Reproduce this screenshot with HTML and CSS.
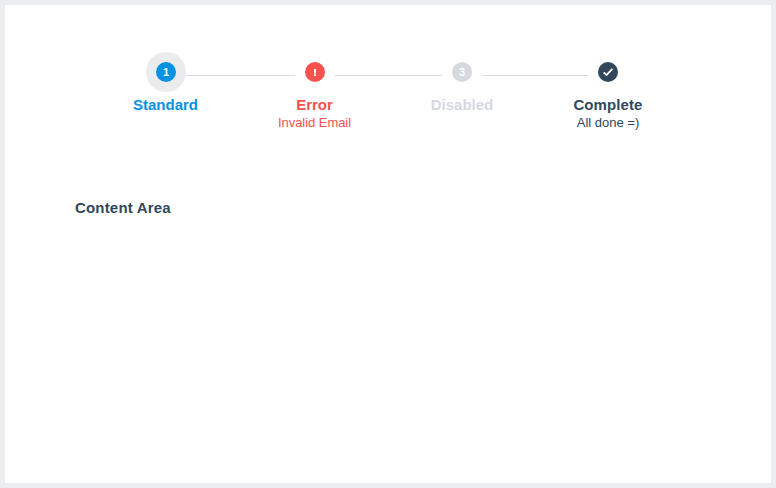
FILE: index.html
```
<!DOCTYPE html>
<html lang="en">
<head>
<meta charset="utf-8">
<title>Steps</title>
<link rel="stylesheet" href="styles.css">
</head>
<body>
<main class="panel">
  <ol class="steps">
    <li class="step step-current">
      <span class="halo"><span class="dot">1</span></span>
      <span class="label">Standard</span>
    </li>
    <li class="line line-first"></li>
    <li class="step step-error">
      <span class="halo"><span class="dot"><svg width="20" height="20" viewBox="0 0 20 20"><path d="M9 7h2v4.4H9zM9 12.2h2v1.8H9z" fill="#fff"/></svg></span></span>
      <span class="label">Error</span>
      <span class="note">Invalid Email</span>
    </li>
    <li class="line line-second"></li>
    <li class="step step-disabled">
      <span class="halo"><span class="dot">3</span></span>
      <span class="label">Disabled</span>
    </li>
    <li class="line line-third"></li>
    <li class="step step-complete">
      <span class="halo"><span class="dot"><svg width="20" height="20" viewBox="0 0 20 20"><path d="M5.7 10.3 8.5 13 14.4 6.8" fill="none" stroke="#fff" stroke-width="1.8"/></svg></span></span>
      <span class="label">Complete</span>
      <span class="note">All done =)</span>
    </li>
  </ol>
  <h1 class="heading">Content Area</h1>
</main>
</body>
</html>
```
FILE: styles.css
```
* { box-sizing: border-box; }
body {
  margin: 0;
  font-family: "Liberation Sans", Arial, sans-serif;
  color: #33475b;
}
.panel {
  height: 488px;
  padding: 47px 143px 0 141px;
  border: 5px solid #ebedef;
  background: #fff;
}
.steps {
  display: flex;
  height: 146px;
  margin: 0;
  padding: 0;
  list-style: none;
}
.step {
  display: flex;
  flex: none;
  flex-direction: column;
  align-items: center;
  width: 40px;
  white-space: nowrap;
}
.halo {
  display: flex;
  flex: none;
  align-items: center;
  justify-content: center;
  width: 40px;
  height: 40px;
  border-radius: 50%;
}
.dot {
  display: flex;
  align-items: center;
  justify-content: center;
  width: 20px;
  height: 20px;
  border-radius: 50%;
  background: currentColor;
  font-size: 11px;
  font-weight: bold;
  line-height: 20px;
  -webkit-text-fill-color: #fff;
}
.label {
  margin-top: 3px;
  font-size: 15px;
  font-weight: bold;
  line-height: 20px;
}
.note {
  font-size: 13px;
  line-height: 16px;
}
.line {
  flex: none;
  height: 1px;
  margin-top: 23px;
  background: #d6d9df;
}
.line-first { width: 109px; }
.line-second { width: 107px; }
.line-third { width: 106px; }
.step-current { color: #0691e2; }
.step-current .halo { background: #ebecee; }
.step-current .label,
.step-error .label,
.step-error .note { margin-right: 1px; }
.step-error { color: #f8524e; }
.step-error .note { letter-spacing: -0.05px; }
.step-disabled { color: #d6d9df; }
.step-complete { color: #33475b; }
.step-complete .label { letter-spacing: 0.1px; }
.heading {
  margin: 0 0 0 -71px;
  font-size: 15px;
  font-weight: bold;
  line-height: 20px;
  letter-spacing: 0.18px;
}
```
